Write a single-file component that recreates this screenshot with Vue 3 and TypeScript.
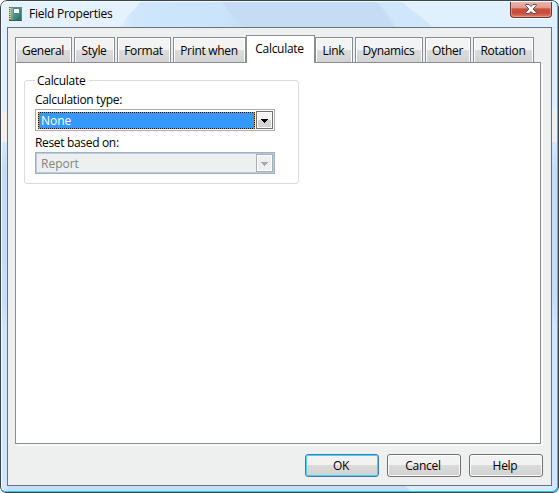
<script setup lang="ts">
import { ref } from 'vue'

interface Tab { name: string; width: number }

const tabs: Tab[] = [
  { name: 'General', width: 57 },
  { name: 'Style', width: 41 },
  { name: 'Format', width: 54 },
  { name: 'Print when', width: 73 },
  { name: 'Calculate', width: 69 },
  { name: 'Link', width: 38 },
  { name: 'Dynamics', width: 68 },
  { name: 'Other', width: 46 },
  { name: 'Rotation', width: 61 },
]
const active = ref('Calculate')
</script>

<template>
  <div class="window">
    <svg class="glass" width="559" height="493" viewBox="0 0 559 493">
      <defs>
        <linearGradient id="top" x1="0" x2="1">
          <stop offset="0" stop-color="#e4f1fd" />
          <stop offset=".2" stop-color="#e6f3fe" />
          <stop offset=".24" stop-color="#cfe6fb" />
          <stop offset=".4" stop-color="#cae4fb" />
          <stop offset=".45" stop-color="#c5dcf4" />
          <stop offset=".68" stop-color="#c5dcf4" />
          <stop offset=".71" stop-color="#d0e6fb" />
        </linearGradient>
        <linearGradient id="side" x1="0" x2="0" y1="0" y2="1">
          <stop offset="0" stop-color="#d4e8fc" />
          <stop offset=".08" stop-color="#c5dcf5" />
          <stop offset=".45" stop-color="#c7def7" />
          <stop offset=".53" stop-color="#cfe6fd" />
          <stop offset="1" stop-color="#cfe6fd" />
        </linearGradient>
      </defs>
      <rect width="559" height="493" fill="#e0f0fe" />
      <rect width="559" height="28" fill="url(#top)" />
      <path d="M0 0H142L134 10L128 15L120 27H0Z" fill="#e5f2fe" />
      <path d="M222 2L230 13L244 27H395L377 2Z" fill="#c5dcf4" />
      <path d="M377 2L400 27H433L402 2Z" fill="#d0e6fb" />
      <path d="M402 2L433 27H559V0Z" fill="#e0f0fe" />
      <rect y="112" width="8" height="30" fill="#f6eee9" />
      <rect x="552" y="110" width="7" height="32" fill="#edf0ef" />
      <rect y="142" width="8" height="351" fill="url(#side)" />
      <rect x="552" y="142" width="7" height="351" fill="url(#side)" />
      <rect x="8" y="486" width="544" height="7" fill="#c5dcf5" />
      <path d="M405 486h147v7h-140z" fill="#d8ebfd" />
    </svg>
    <header class="titlebar">
      <svg class="app-icon" width="13" height="14" viewBox="0 0 13 14">
        <defs>
          <linearGradient id="book" x1="0" x2="1" y1="0" y2="1">
            <stop offset="0" stop-color="#a3b9b5" />
            <stop offset=".5" stop-color="#4b948c" />
            <stop offset="1" stop-color="#12655f" />
          </linearGradient>
        </defs>
        <rect x="1" width="12" height="14" fill="url(#book)" />
        <path d="M1 .5H12.5V13" fill="none" stroke="#6d8782" />
        <path d="M1 13.5H13" stroke="#3c5954" />
        <path d="M.5 0V14" stroke="#66683c" />
        <path d="M0 1.5h2m-2 2h2m-2 2h2m-2 2h2m-2 2h2m-2 2h2" stroke="#ecd45c" />
        <path d="M5 2h5v4H5z" fill="#fff" />
        <path d="M4.500 1.500h6v5h-6z" fill="none" stroke="#508981" />
        <path d="M3 1v12" stroke="#9bb9b4" stroke-width=".7" />
      </svg>
      <span class="title">Field Properties</span>
      <button class="close" aria-label="Close">
        <svg width="12" height="10" viewBox="0 0 12 10">
          <path d="M.7.5H4L6 2.5 8 .5h3.3v1L8.2 5l3.1 3.5v1H8L6 7.5 4 9.5H.7v-1L3.8 5 .7 1.5z" fill="#fff" stroke="#55525b" />
        </svg>
      </button>
    </header>
    <main class="client">
      <nav class="tabs">
        <button
          v-for="tab in tabs" :key="tab.name"
          :class="['tab', { active: tab.name === active }]"
          :style="{ width: tab.width + 'px' }"
          @click="active = tab.name"
        ><span>{{ tab.name }}</span></button>
      </nav>
      <section class="page">
        <fieldset class="group">
          <legend>Calculate</legend>
          <label class="label type">Calculation type:</label>
          <div class="combo">
            <span class="value">
              <span>None</span>
              <svg class="focus" width="218" height="17"><rect class="base" x=".5" y=".5" width="217" height="16" /><rect class="dots" x=".5" y=".5" width="217" height="16" /></svg>
            </span>
            <button class="arrow"><svg width="7" height="4" viewBox="0 0 7 4" shape-rendering="crispEdges"><path d="M0 0h7v1H6v1H5v1H4v1H3V3H2V2H1V1H0z" /></svg></button>
          </div>
          <label class="label reset">Reset based on:</label>
          <div class="combo disabled">
            <span class="value"><span>Report</span></span>
            <button class="arrow" disabled><svg width="7" height="4" viewBox="0 0 7 4" shape-rendering="crispEdges"><path d="M0 0h7v1H6v1H5v1H4v1H3V3H2V2H1V1H0z" /></svg></button>
          </div>
        </fieldset>
      </section>
      <footer class="actions">
        <button class="action ok"><span>OK</span></button>
        <button class="action"><span>Cancel</span></button>
        <button class="action"><span>Help</span></button>
      </footer>
    </main>
  </div>
</template>

<style>
body { background: #fff; overflow: hidden; }
</style>

<style scoped>
* { box-sizing: border-box; }
button { font: inherit; color: inherit; padding: 0; margin: 0; border: 0; }
.window {
  position: relative; width: 559px; height: 493px; overflow: hidden;
  padding: 0 7px; border-radius: 7px 7px 6px 6px;
  font: 12px/16px "Open Sans", "Noto Sans", sans-serif; color: #000;
  white-space: nowrap;
}
.window::after {
  content: ""; position: absolute; inset: 0; pointer-events: none;
  border: 1px solid #394453; border-radius: 7px 7px 6px 6px;
  box-shadow: inset -1px -1px #1dcdf5, inset 1px 1px #f5fbff;
}
.glass { position: absolute; left: 0; top: 0; }
.titlebar { position: relative; height: 27px; display: flex; align-items: flex-start; padding: 6px 0 0 2px; }
.app-icon { margin-top: 1px; }
.title { margin-left: 7px; letter-spacing: -.25px; }
.close {
  width: 42px; height: 17px; margin: -5px 0 0 auto; display: grid; place-items: center;
  border: 1px solid #6c3435; border-top: 0; border-radius: 0 0 4px 4px;
  background: linear-gradient(#edb4aa 0 1px, #df998b 45%, #c6503d 48%, #ca4c38 75%, #de7e67);
  box-shadow: inset 0 0 0 1px #f0b5aa88, 0 1px #f8ffff;
}
.client {
  position: relative; width: 545px; height: 459px; padding: 7px 8px 0 7px;
  border: 1px solid #68737f; background: #eef0ef;
}
.tabs { display: flex; align-items: flex-end; gap: 2px; height: 27px; }
.tab {
  height: 25px; display: flex; justify-content: center; align-items: center;
  border: 1px solid #898c95; border-bottom: 0; padding: 1px 1px 0 0;
  background: linear-gradient(#f3f3f3 0 50%, #dcdcdc 50%, #d2d2d2);
  box-shadow: inset 1px 1px #fff, inset -1px 0 #fff;
  letter-spacing: -.3px;
}
.tab.active {
  height: 28px; margin: 0 -2px -1px -2px; padding: 0 2px 1px 0;
  background: #fff; position: relative; z-index: 1;
}
.page {
  width: 526px; height: 382px; border: 1px solid #898c95; background: #fff;
  padding: 9px 8px; box-shadow: 2px 2px #fafafa;
}
.group {
  width: 275px; height: 112px; margin: 0; padding: 0 10px; min-width: 0;
  border: 1px solid #d9dcdb; border-radius: 3px;
}
legend { height: 16px; line-height: 18px; padding: 0 4px 0 2px; letter-spacing: -.3px; }
.label { display: block; height: 16px; letter-spacing: -.33px; }
.type { margin-top: 4px; }
.reset { margin-top: 4px; }
.combo {
  display: flex; gap: 1px; width: 240px; height: 22px; margin-top: 1px;
  border: 1px solid #abadb3; padding: 1px 1px 1px 2px; background: #fff;
}
.value { position: relative; width: 217px; height: 17px; margin-top: 1px; padding-left: 3px; line-height: 17px; background: #39f; color: #fff; }
.focus { position: absolute; left: 0; top: 0; width: 217px; fill: none; }
.focus rect { width: 216px; }
.base { stroke: #df8a34; }
.dots { stroke: #141414; stroke-dasharray: 1 1; stroke-dashoffset: .5; }
.arrow {
  width: 17px; height: 18px; display: grid; place-items: center; padding-top: 1px;
  border: 1px solid #707070; background: linear-gradient(#f3f3f3 0 50%, #d4d4d4 50%);
  box-shadow: inset 0 0 0 1px #fff;
}
.disabled { background: #eef0ef; box-shadow: inset 0 0 0 1px #b3cde9; }
.disabled .value { background: transparent; color: #838383; }
.disabled .arrow { border-color: #abadb3; background: #eef0ef; }
.disabled .arrow svg { fill: #a7a8ad; }
.actions { display: flex; justify-content: flex-end; gap: 8px; padding-top: 10px; }
.action {
  width: 74px; height: 23px; display: grid; place-items: center; padding-right: 2px;
  border: 1px solid #707070; border-radius: 3px;
  background: linear-gradient(#f2f2f2 0 50%, #dbdbdb 50%, #d0d0d0);
  box-shadow: inset 0 0 0 1px #fcfcfc; letter-spacing: -.3px;
}
.ok { border-color: #3c7fb1; box-shadow: inset 0 0 0 1px #48d0f7; }
</style>
